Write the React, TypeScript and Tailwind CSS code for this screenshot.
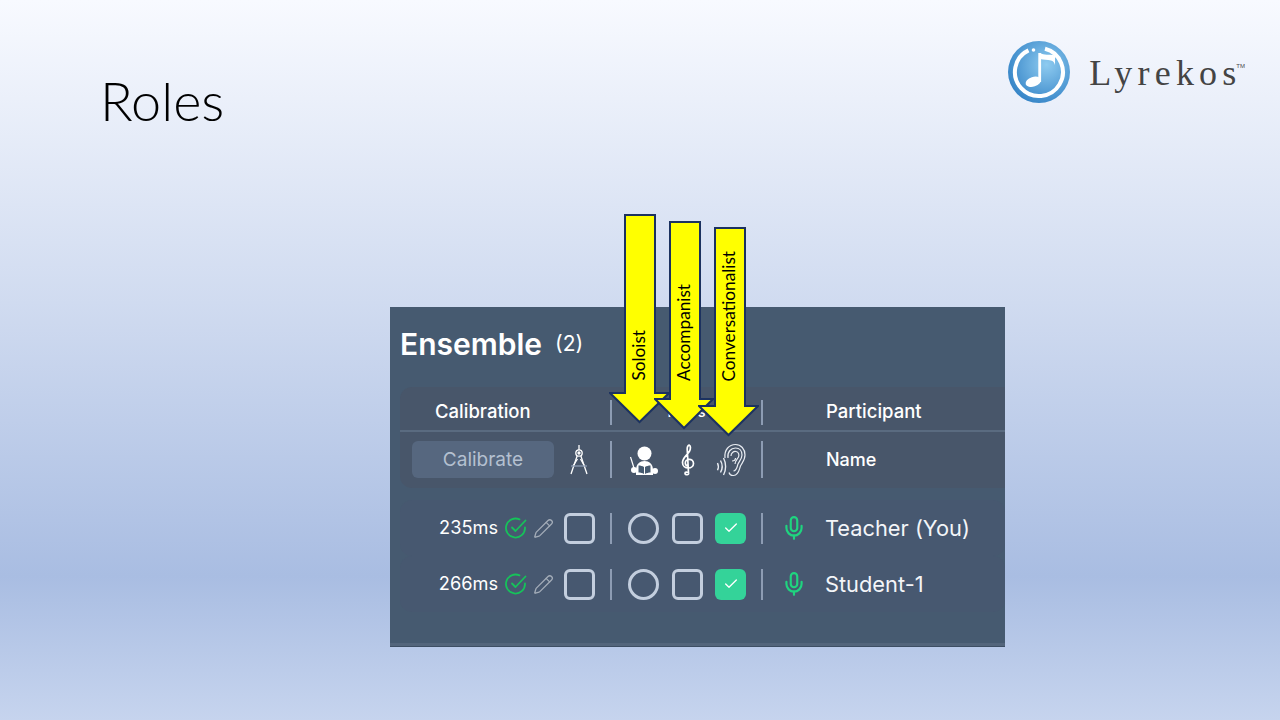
import { Mic, Pencil, Check } from "lucide-react";

const inter = "font-['Inter',sans-serif]";

const Sep = () => <div className="w-[2px] h-[37px] bg-[#8d9cb3] shrink-0" />;

const Logo = () => (
  <svg width="62" height="62" viewBox="0 0 62 62" className="shrink-0">
    <defs>
      <radialGradient id="lg" cx="0.62" cy="0.38" r="0.75">
        <stop offset="0" stopColor="#8ecbf0" />
        <stop offset="1" stopColor="#2b7cc2" />
      </radialGradient>
    </defs>
    <circle cx="31" cy="31" r="31" fill="url(#lg)" />
    <path d="M20.500 9.400A24 24 0 1 0 37 7.800" fill="none" stroke="#fff" strokeWidth="4" />
    <circle cx="25.500" cy="9" r="1.800" fill="#fff" />
    <rect x="30.300" y="12" width="2.800" height="29" fill="#fff" />
    <ellipse cx="25.300" cy="40.700" rx="8" ry="4.800" transform="rotate(-18 25.300 40.700)" fill="#fff" />
    <path d="M32 12c4 2.500 9 1 15 2.500v9.500c-1-3-2-4-4-4.500-4-1-7-.5-11-1.500z" fill="#fff" />
  </svg>
);

const Compass = () => (
  <svg width="22" height="32" viewBox="0 0 22 32" fill="none" stroke="#fff" strokeWidth="1.300">
    <path d="M11 1v5" />
    <circle cx="11" cy="9" r="3.200" />
    <circle cx="11" cy="9" r="1" fill="#fff" />
    <path d="M9.200 11.800 3 30M12.800 11.800 19 30" />
    <path d="M9.500 15 5 22M12.500 15l4 7" />
    <path d="M3 22h16" stroke="#8d9cb3" />
  </svg>
);

const Conductor = () => (
  <svg width="30" height="32" viewBox="0 0 30 32" fill="#fff">
    <circle cx="14.500" cy="9.500" r="7" />
    <path d="M6 26c0-6 4-9 8.500-9s8.500 3 8.500 9v5H6z" />
    <path d="M8.500 21.500c2 0 4 .5 5.500 1.500v7c-1.500-1-3.500-1.500-5.500-1.500zM20.500 21.500c-2 0-4 .5-5.500 1.500v7c1.500-1 3.500-1.500 5.500-1.500z" fill="#465a70" />
    <path d="M0.500 13l3.500 11" stroke="#fff" strokeWidth="1.200" />
    <circle cx="4" cy="26" r="3" />
    <circle cx="25" cy="27" r="3" />
  </svg>
);

const Clef = () => (
  <svg width="14" height="32" viewBox="0 0 14 32" fill="none" stroke="#fff" strokeWidth="1.700">
    <path d="M7.500 29c1 1.800-3.500 2.600-3.500.2 0-1.400 2.400-1.600 2.600-.2M7.500 29L6.200 5c-.1-2.600 1.300-4 2.200-3.800 1.300.4 1.300 3.500.3 5.600C7 10.500 1.500 13.500 1.500 18.500c0 3.500 2.800 5.500 5.800 5.500s5.200-2 5.200-4.500c0-2.500-2-4.200-4.200-4.200-2.400 0-4 1.800-4 3.600 0 1.500 1 2.600 2.200 3" />
  </svg>
);

const EarIcon = () => (
  <svg width="30" height="34" viewBox="0 0 30 34" fill="none" stroke="#e8ecf2" strokeWidth="1.200">
    <path d="M9 15C8 7 13 1.500 19.500 1.500 25 1.500 29 6 29 12c0 5-3 8-4.500 11-1.300 3-1.500 9-7 9.500-2.500.2-4-1.200-4.500-3" />
    <path d="M12 15C11 9 15 5 19.500 5 23.500 5 26 8 26 12c0 3.500-2.500 6-4 9-1 2.500-1 6.500-4.500 7" />
    <path d="M15 13c0-3 2.500-5 5-4.500 2.500.5 3.500 3 2.500 5.500-1 2-3.500 4-3.500 7" />
    <path d="M16 18c2 0 3.500-1 3.500-3" />
    <path d="M7.500 15c2.800 5 2.800 12 0 17M4.500 17.500c2 3.500 2 8.500 0 12M1.500 20c1.100 2.300 1.100 5 0 7.300" strokeWidth="1.400" />
  </svg>
);

const RingCheck = () => (
  <svg width="22" height="22" viewBox="0 0 22 22" fill="none" stroke="#16c25a" strokeWidth="1.800" strokeLinecap="round" strokeLinejoin="round">
    <path d="M20 10.500V11a9.500 9.500 0 1 1-5.500-8.600" />
    <path d="M7 10.500l3.500 3.500L20.500 3.500" />
  </svg>
);

// yellow block arrows that lie over the panel
const Arrow = ({ x, y, w, h, sl, textBottom, label }: { x: number; y: number; w: number; h: number; sl: number; textBottom: number; label: string }) => {
  const shaftR = sl + 30;
  const headY = h - 29;
  return (
    <div className="absolute" style={{ left: x, top: y, width: w, height: h }}>
      <svg width={w + 2} height={h + 4} viewBox={`-1 -1 ${w + 2} ${h + 4}`} className="block">
        <polygon
          points={`${sl},0 ${shaftR},0 ${shaftR},${headY} ${w},${headY} ${w / 2},${h} 0,${headY} ${sl},${headY}`}
          fill="#ffff00"
          stroke="#1c3260"
          strokeWidth="2"
        />
      </svg>
      <div className="absolute w-[30px] flex justify-center" style={{ left: sl, bottom: textBottom }}>
        <span className="[writing-mode:vertical-rl] rotate-180 font-['Lato',sans-serif] text-[17.200px] leading-[30px] text-black whitespace-nowrap">
          {label}
        </span>
      </div>
    </div>
  );
};

const Row = ({ ms, name }: { ms: string; name: string }) => (
  <div className="flex items-center h-[56px] rounded-xl bg-[#475870]">
    <div className="w-[210px] flex items-center justify-end pr-[15px] shrink-0">
      <span className="text-[18.200px] text-white mr-[7px] -mt-[1px]">{ms}</span>
      <RingCheck />
      <Pencil size={21} strokeWidth={1.5} className="text-[#a3acb8] ml-[6px] mr-[10px]" />
      <div className="w-[31px] h-[31px] rounded-md border-[3px] border-[#c3cede]" />
    </div>
    <div className="w-[2px] h-[31px] bg-[#8d9cb3] shrink-0" />
    <div className="w-[149px] flex items-center pl-[16px] shrink-0">
      <div className="w-[31px] h-[31px] rounded-full border-[3px] border-[#c3cede]" />
      <div className="w-[31px] h-[31px] ml-[13px] rounded-md border-[3px] border-[#c3cede]" />
      <div className="w-[31px] h-[31px] ml-[12px] rounded-md bg-[#34d399] flex items-center justify-center">
        <Check size={16} strokeWidth={2} className="text-white" />
      </div>
    </div>
    <div className="w-[2px] h-[31px] bg-[#8d9cb3] shrink-0" />
    <Mic size={26} strokeWidth={2} className="text-[#1fd47f] ml-[18px] mr-[18px] shrink-0" />
    <span className="text-[21.800px] text-[#f3f5f8] whitespace-nowrap">{name}</span>
  </div>
);

export default function App() {
  return (
    <div className={`relative w-[1280px] h-[720px] overflow-hidden bg-[linear-gradient(180deg,#f8faff_0%,#d0dbf0_42%,#a9bde2_80%,#c6d4ee_100%)] ${inter}`}>
      <div className="flex justify-between h-[307px]">
        <h1 className="font-['Lato',sans-serif] font-light text-[54px] leading-[60px] text-black pl-[100px] pt-[71px]">Roles</h1>
        <div className="flex items-start pt-[41px] pr-[35px]">
          <Logo />
          <span className="font-['Liberation_Serif',serif] text-[36px] leading-[64px] text-[#444444] ml-[19px] tracking-[5.200px]">Lyreko</span>
          <span className="font-['Liberation_Serif',serif] text-[36px] leading-[64px] text-[#444444]">s</span>
          <span className="font-['Liberation_Sans',sans-serif] text-[6px] leading-none text-[#4a4a4a] mt-[22px]">TM</span>
        </div>
      </div>

      <div className="ml-[390px] w-[615px] h-[340px] bg-[#465a70] border-b border-[#3d4e63] shadow-[inset_0_-3px_0_#53657b] pl-[10px] overflow-hidden">
        <div className="flex items-start h-[80px] pt-[19px]">
          <span className="text-[30px] leading-[36px] font-semibold text-white">Ensemble</span>
          <span className="text-[21px] leading-[36px] text-white ml-[13px]">(2)</span>
        </div>

        <div className="rounded-l-xl bg-[#48566a] h-[101px]">
          <div className="flex items-center h-[45px] border-b-2 border-[#5a6b80] pt-[7px]">
            <div className="w-[210px] pl-[35px] text-[18.500px] font-medium text-white shrink-0">Calibration</div>
            <div className="w-[2px] h-[25px] bg-[#8d9cb3] shrink-0" />
            <div className="w-[149px] text-center text-[14.500px] font-medium text-white shrink-0">Roles</div>
            <div className="w-[2px] h-[25px] bg-[#8d9cb3] shrink-0" />
            <div className="pl-[63px] text-[18.500px] font-medium text-white">Participant</div>
          </div>
          <div className="flex items-center h-[55px]">
            <div className="w-[210px] flex items-center pl-[12px] shrink-0">
              <div className="w-[142px] h-[37px] pt-[1px] rounded-md bg-[#56677f] flex items-center justify-center text-[19px] text-[#b4c0d0]">Calibrate</div>
              <div className="ml-[14px]"><Compass /></div>
            </div>
            <Sep />
            <div className="w-[149px] flex items-center pl-[18px] shrink-0">
              <Conductor />
              <div className="ml-[21px]"><Clef /></div>
              <div className="ml-[21px]"><EarIcon /></div>
            </div>
            <Sep />
            <div className="pl-[63px] text-[18px] font-medium text-white">Name</div>
          </div>
        </div>

        <div className="mt-[12px] flex flex-col">
          <Row ms="235ms" name="Teacher (You)" />
          <Row ms="266ms" name="Student-1" />
        </div>
      </div>

      <Arrow x={609} y={214} w={59} h={207} sl={15} textBottom={40} label="Soloist" />
      <Arrow x={654} y={221} w={58} h={206} sl={15} textBottom={46} label="Accompanist" />
      <Arrow x={698} y={227} w={59} h={207} sl={16} textBottom={53} label="Conversationalist" />
    </div>
  );
}
